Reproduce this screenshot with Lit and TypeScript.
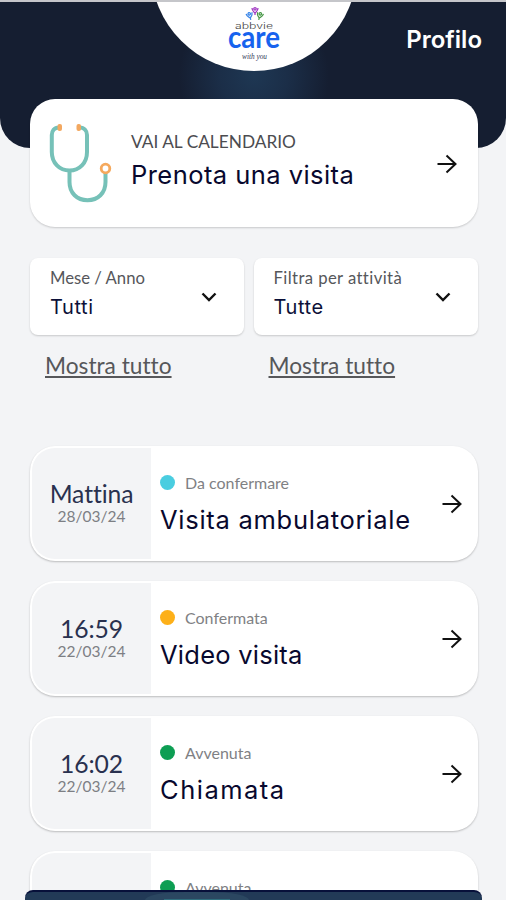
import { LitElement, html, css, svg } from "lit";
import { customElement, property } from "lit/decorators.js";

const arrow = html`<svg class="arrow" width="22" height="22" viewBox="0 0 22 22" fill="none" stroke="#111" stroke-width="2">
  <path d="M1.500 11H19M10.500 2.500L19.500 11L10.500 19.500" />
</svg>`;

const chevron = html`<svg class="chevron" width="16" height="12" viewBox="0 0 16 12" fill="none" stroke="#111" stroke-width="2.4">
  <path d="M1.5 2.5L8 9L14.5 2.5" />
</svg>`;

const stethoscope = html`<svg class="steth" width="64" height="80" viewBox="0 0 64 80" fill="none" stroke-width="4">
  <path stroke="#76c1b8" d="M10 4.5C5 4.5 2.800 8 2.800 12V29C2.800 40 10.500 47.500 20.500 47.500S38 40 38 29V12C38 8 35.500 4.500 30.500 4.500" />
  <path stroke="#76c1b8" d="M20.500 47.500V59C20.500 70 28 77.200 38.500 77.200S56.500 70 56.500 59V50" />
  <rect x="8.500" y="1" width="4.500" height="7" rx="2" fill="#f3a860" />
  <rect x="27.500" y="1" width="4.500" height="7" rx="2" fill="#f3a860" />
  <circle cx="56.500" cy="45.500" r="4.300" stroke="#f5a95d" stroke-width="2.800" />
</svg>`;

const person = (x: number, y: number, color: string, turn: number) => svg`
  <g transform="translate(${x} ${y}) rotate(${turn})" stroke=${color} fill="none" stroke-width="1.300">
    <circle cx="0" cy="-1.200" r="1.200" />
    <path d="M-3 -2C-3 1 -1.500 1.500 0 3C1.500 1.500 3 1 3 -2M0 3V5" />
  </g>`;

@customElement("visit-card")
class VisitCard extends LitElement {
  @property() when = "";
  @property() date = "";
  @property() status = "";
  @property() name = "";
  @property() tone = "";
  @property() tracking = "";

  static styles = css`
    :host { display: block; }
    .card {
      box-sizing: border-box; height: 115px; padding: 2px; border-radius: 25px; background: #fff;
      box-shadow: 0 1px 2px rgba(0, 0, 0, 0.23); display: flex;
    }
    .time {
      width: 119px; border-radius: 23px 0 0 23px; background: #f3f4f6; display: flex;
      flex-direction: column; align-items: center; justify-content: center; box-sizing: border-box;
    }
    .when { font-size: 24.700px; line-height: 26px; color: #29314f; letter-spacing: -0.100px; }
    .date { font-size: 15.500px; line-height: 19px; color: #7d7f84; }
    .body { flex: 1; padding: 24px 0 0 9px; }
    .status { display: flex; align-items: center; gap: 10px; height: 21px; font-size: 16px; line-height: 18px; color: #7f8184; }
    .dot { width: 15px; height: 15px; border-radius: 50%; }
    .cyan { background: #4acde0; }
    .amber { background: #fdb019; }
    .green { background: #0d9e53; }
    .name { font: 400 25.500px/32px Inter, sans-serif; color: #08082e; margin-top: 11px; white-space: nowrap; }
    .snug { letter-spacing: 0.250px; }
    .open { letter-spacing: 0.730px; }
    .wide { letter-spacing: 1.500px; }
    .arrow { align-self: center; margin: 0 13px 0 0; flex: none; }
  `;

  render() {
    return html`<div class="card">
      <div class="time"><span class="when">${this.when}</span><span class="date">${this.date}</span></div>
      <div class="body">
        <div class="status"><i class="dot ${this.tone}"></i><span>${this.status}</span></div>
        <div class="name ${this.tracking}">${this.name}</div>
      </div>
      ${arrow}
    </div>`;
  }
}

@customElement("app-root")
class AppRoot extends LitElement {
  static styles = css`
    :host {
      display: block; position: relative; height: 900px; overflow: hidden; background: #f3f4f6;
      font-family: Lato, sans-serif; font-variant-ligatures: none;
    }
    .strip { height: 2px; background: #c5c6ca; }
    .header {
      position: relative; height: 146px; border-radius: 0 0 30px 30px; overflow: hidden;
      background: radial-gradient(ellipse 75px 76px at 254px 74px, #1e3753 0%, #1b2e48 45%, #151e31 100%);
      display: flex; justify-content: flex-end;
    }
    .bubble {
      position: absolute; left: 151px; top: -137.500px; width: 206px; height: 206px; border-radius: 50%; background: #fff;
    }
    .logo { position: absolute; left: 214px; top: 3px; }
    .profile { font: 600 24px/32px Inter, sans-serif; color: #fff; margin: 22px 24px 0 0; }
    .main { position: relative; margin-top: -49px; padding: 0 28px 0 30px; }
    .book {
      box-sizing: border-box; height: 128px; border-radius: 25px; background: #fff; padding: 0 20px 0 19px;
      box-shadow: 0 1px 2px rgba(0, 0, 0, 0.18); display: flex; align-items: center;
    }
    .book .arrow { margin-top: 2px; }
    .copy { flex: 1; margin: 0 0 4px 18px; }
    .over { font-size: 17.300px; line-height: 22px; color: #4c4c50; }
    .title { font: 400 25.500px/34px Inter, sans-serif; letter-spacing: 0.450px; color: #08082e; margin-top: 5px; white-space: nowrap; }
    .filters { display: grid; grid-template-columns: 214px 224.500px; gap: 0 9.500px; margin-top: 31px; }
    .select {
      box-sizing: border-box; height: 77px; border-radius: 8px; background: #fff; padding: 0 27px 0 20px;
      box-shadow: 0 1px 2px rgba(0, 0, 0, 0.18); display: flex; justify-content: space-between; align-items: center;
    }
    .label { font-size: 16.700px; line-height: 22px; color: #56575b; }
    .spaced { letter-spacing: 0.400px; }
    .value { font: 400 20px/28px Inter, sans-serif; letter-spacing: 0.600px; color: #0b1038; margin: 4px 0 6px; }
    .all { margin: 17px 0 0 15px; font-size: 22.700px; line-height: 28px; color: #56575a; text-decoration: underline; text-decoration-thickness: 1.500px; text-underline-offset: 2px; }
    .list { margin-top: 66px; display: flex; flex-direction: column; gap: 20px; }
    .nav {
      position: absolute; left: 25px; right: 24px; bottom: 0; height: 10px; box-sizing: border-box;
      border-radius: 8px 8px 0 0; border-top: 2px solid #07103a; background: #223a57; display: flex;
    }
    .tab { margin-left: 120px; width: 104px; height: 8px; background: #2b4761; border-radius: 40px 40px 0 0 / 8px 8px 0 0; display: flex; justify-content: center; align-items: flex-end; }
    .mark { width: 66px; height: 1px; background: #2f6e7d; }
  `;

  render() {
    return html`
      <div class="strip"></div>
      <div class="header">
        <div class="bubble"></div>
        <svg class="logo" width="80" height="62" viewBox="0 0 80 62">
          ${person(35.500, 10, "#3a86e8", -15)}${person(46, 10, "#4b9a4b", 15)}${person(41, 5, "#a23cc4", 0)}
          <text x="21" y="24" textLength="38" lengthAdjust="spacingAndGlyphs" font-family="Inter, sans-serif" font-weight="300" font-size="8.500" fill="#444">abbvie</text>
          <text x="14" y="43.300" textLength="52" lengthAdjust="spacingAndGlyphs" font-family="Lato, sans-serif" font-weight="700" font-size="31" fill="#1763ee">care</text>
          <text x="28" y="53.500" textLength="25" lengthAdjust="spacingAndGlyphs" font-family="Liberation Serif, serif" font-style="italic" font-size="7.500" fill="#333958">with you</text>
        </svg>
        <div class="profile">Profilo</div>
      </div>
      <div class="main">
        <div class="book">
          ${stethoscope}
          <div class="copy"><div class="over">VAI AL CALENDARIO</div><div class="title">Prenota una visita</div></div>
          ${arrow}
        </div>
        <div class="filters">
          <div class="select"><div><div class="label">Mese / Anno</div><div class="value">Tutti</div></div>${chevron}</div>
          <div class="select"><div><div class="label spaced">Filtra per attività</div><div class="value">Tutte</div></div>${chevron}</div>
          <div class="all">Mostra tutto</div>
          <div class="all">Mostra tutto</div>
        </div>
        <div class="list">
          <visit-card when="Mattina" date="28/03/24" status="Da confermare" name="Visita ambulatoriale" tone="cyan" tracking="open"></visit-card>
          <visit-card when="16:59" date="22/03/24" status="Confermata" name="Video visita" tone="amber" tracking="snug"></visit-card>
          <visit-card when="16:02" date="22/03/24" status="Avvenuta" name="Chiamata" tone="green" tracking="wide"></visit-card>
          <visit-card status="Avvenuta" tone="green"></visit-card>
        </div>
      </div>
      <div class="nav"><div class="tab"><div class="mark"></div></div></div>
    `;
  }
}
